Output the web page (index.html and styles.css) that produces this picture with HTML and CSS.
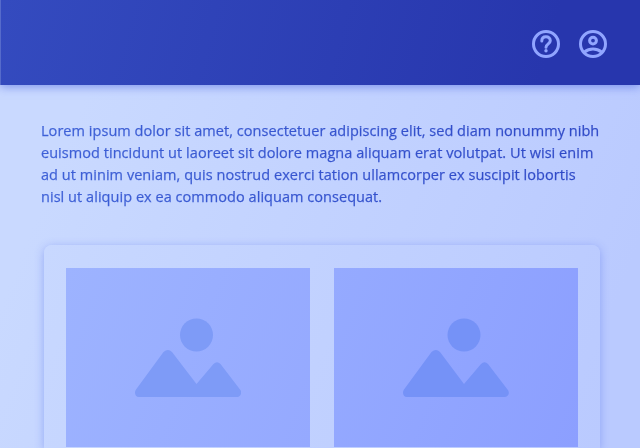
FILE: index.html
```html
<!DOCTYPE html>
<html lang="en">
<head>
<meta charset="utf-8">
<title>Gallery</title>
<link rel="stylesheet" href="styles.css">
</head>
<body>
<header class="topbar">
  <svg class="icon" viewBox="0 0 28 28"><circle cx="14" cy="14" r="12.500"/><path d="M9.800 11C9.800 8.400 11.500 6.800 14 6.800S18.300 8.400 18.300 10.800C18.300 13.800 14 14 14 17.300"/><circle class="dot" cx="14" cy="20.800" r="1.700"/></svg>
  <svg class="icon" viewBox="0 0 28 28"><circle cx="14" cy="14" r="12.500"/><circle cx="14" cy="10.600" r="3.400"/><path d="M5.500 22C10.500 18 17.500 18 22.500 22"/></svg>
</header>
<main class="content">
  <p class="intro">Lorem ipsum dolor sit amet, consectetuer adipiscing elit, sed diam nonummy nibh<br>euismod tincidunt ut laoreet sit dolore magna aliquam erat volutpat. Ut wisi enim<br>ad ut minim veniam, quis nostrud exerci tation ullamcorper ex suscipit lobortis<br>nisl ut aliquip ex ea commodo aliquam consequat.</p>
  <section class="card">
    <div class="photo photo-left"><svg class="picture" viewBox="0 0 106 79"><circle cx="61.500" cy="17" r="16.500"/><path d="M28.500 34Q33 30 37 34L61.500 66L78.500 46Q82 42.500 85.500 46L105 71.500C108 75 105 79 101.500 79H4C0 79-1 74.500 1 71.500Z"/></svg></div>
    <div class="photo photo-right"><svg class="picture" viewBox="0 0 106 79"><circle cx="61" cy="17" r="16.500"/><path d="M28.500 34Q33 30 37 34L61 66L78 46Q81.500 42.500 85 46L104.500 71.500C107.500 75 105 79 101.500 79H4C0 79-1 74.500 1 71.500Z"/></svg></div>
  </section>
</main>
</body>
</html>
```
FILE: styles.css
```css
* { box-sizing: border-box; }
body {
  margin: 0;
  height: 448px;
  overflow: hidden;
  display: flex;
  flex-direction: column;
  background: linear-gradient(112deg, #c9d9ff 15%, #bacaff 90%);
  font-family: "Open Sans", "Noto Sans", sans-serif;
}
.topbar {
  flex: none;
  height: 85px;
  padding: 2px 33px 0 0;
  display: flex;
  justify-content: flex-end;
  align-items: center;
  gap: 19px;
  background: linear-gradient(105deg, #344bbf, #2736ad 85%);
  border-left: 1px solid #566bcb;
  box-shadow: 0 2px 9px rgba(70, 95, 220, .55);
}
.icon {
  width: 28px;
  height: 28px;
  fill: none;
  stroke: #91a5ff;
  stroke-width: 3;
  stroke-linecap: round;
}
.dot { fill: #91a5ff; stroke: none; }
.content {
  flex: 1;
  min-height: 0;
  display: flex;
  flex-direction: column;
  padding: 35px 40px 0 41px;
}
.intro {
  flex: none;
  margin: 0;
  font-size: 14.500px;
  letter-spacing: .045px;
  line-height: 22px;
  white-space: nowrap;
  color: transparent;
  -webkit-text-stroke: .25px transparent;
  background: linear-gradient(100deg, #3d60d7, #2d47c6);
  background-clip: text;
}
.card {
  flex: 1;
  min-height: 0;
  width: 556px;
  margin: 37px 0 0 3px;
  padding: 23px 22px 0;
  display: flex;
  gap: 24px;
  border-radius: 8px 8px 0 0;
  background: linear-gradient(110deg, #c8d8ff, #bacaff);
  box-shadow: 0 2px 10px rgba(90, 115, 235, .46);
}
.photo {
  width: 244px;
  height: 179px;
  padding: 50px 0 0 69px;
}
.photo-left { background: linear-gradient(110deg, #9db3ff, #95a9ff); }
.photo-right { background: linear-gradient(110deg, #95aaff, #8c9fff); }
.picture { display: block; width: 106px; height: 79px; }
.photo-left .picture { fill: #7e9bf7; }
.photo-right .picture { fill: #7592f7; }
```
